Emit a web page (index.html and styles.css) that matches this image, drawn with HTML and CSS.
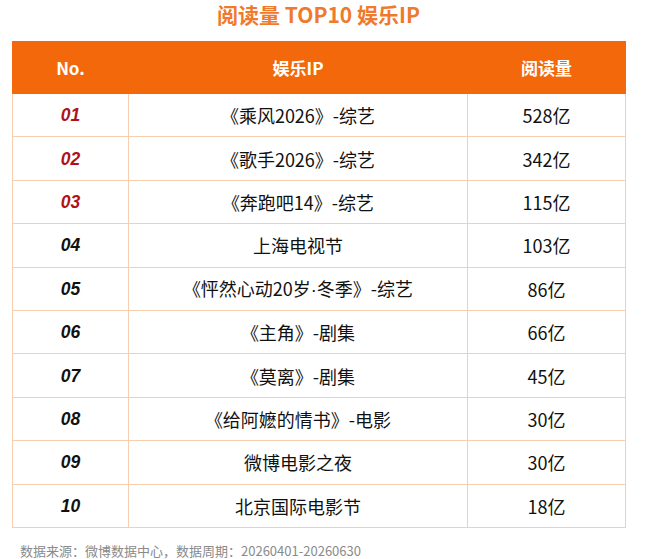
FILE: index.html
```html
<!DOCTYPE html>
<html lang="zh">
<head>
<meta charset="utf-8">
<title>阅读量 TOP10 娱乐IP</title>
<link rel="stylesheet" href="styles.css">
</head>
<body>
<div class="page">
  <h1 class="title">阅读量 TOP10 娱乐IP</h1>
  <table class="rank">
    <colgroup>
      <col class="c-no">
      <col class="c-name">
      <col class="c-val">
    </colgroup>
    <thead>
      <tr><th>No.</th><th>娱乐IP</th><th>阅读量</th></tr>
    </thead>
    <tbody>
      <tr><td class="no top">01</td><td>《乘风2026》-综艺</td><td>528亿</td></tr>
      <tr><td class="no top">02</td><td>《歌手2026》-综艺</td><td>342亿</td></tr>
      <tr><td class="no top">03</td><td>《奔跑吧14》-综艺</td><td>115亿</td></tr>
      <tr><td class="no">04</td><td>上海电视节</td><td>103亿</td></tr>
      <tr><td class="no">05</td><td>《怦然心动20岁<span class="dot">·</span>冬季》-综艺</td><td>86亿</td></tr>
      <tr><td class="no">06</td><td>《主角》-剧集</td><td>66亿</td></tr>
      <tr><td class="no">07</td><td>《莫离》-剧集</td><td>45亿</td></tr>
      <tr><td class="no">08</td><td>《给阿嬷的情书》-电影</td><td>30亿</td></tr>
      <tr><td class="no">09</td><td>微博电影之夜</td><td>30亿</td></tr>
      <tr><td class="no">10</td><td>北京国际电影节</td><td>18亿</td></tr>
    </tbody>
  </table>
  <p class="source">数据来源：微博数据中心，数据周期：20260401-20260630</p>
</div>
</body>
</html>
```

FILE: styles.css
```css
html, body {
  margin: 0;
  padding: 0;
  background: #ffffff;
}
.page {
  width: 650px;
  padding: 0 0 0 12px;
  box-sizing: border-box;
  font-family: "Noto Sans CJK SC", "Noto Sans", sans-serif;
  color: #111111;
}
.title {
  margin: 0;
  width: 613px;
  height: 41px;
  line-height: 28px;
  text-align: center;
  font-size: 21px;
  font-weight: 700;
  color: #ef7a2c;
}
.rank {
  width: 613px;
  border-collapse: collapse;
  table-layout: fixed;
}
.c-no { width: 116px; }
.c-name { width: 339px; }
.c-val { width: 158px; }
.rank th {
  background: #f2680b;
  color: #ffffff;
  font-size: 17px;
  font-weight: 700;
  height: 51px;
  padding: 0;
  border: 1px solid #f2680b;
  text-align: center;
}
.rank td {
  height: 42.4px;
  padding: 0;
  border: 1px solid #f6cdae;
  text-align: center;
  font-size: 18px;
  line-height: 24px;
}
.rank td.no {
  font-family: "Liberation Sans", Arial, sans-serif;
  font-style: italic;
  font-weight: 700;
  font-size: 17.5px;
  color: #111111;
}
.rank td.no.top {
  color: #b0121a;
}
.dot {
  font-family: "Liberation Sans", Arial, sans-serif;
}
.source {
  margin: 14px 0 0 8px;
  font-size: 13px;
  line-height: 18px;
  color: #8a8a8a;
}
```
